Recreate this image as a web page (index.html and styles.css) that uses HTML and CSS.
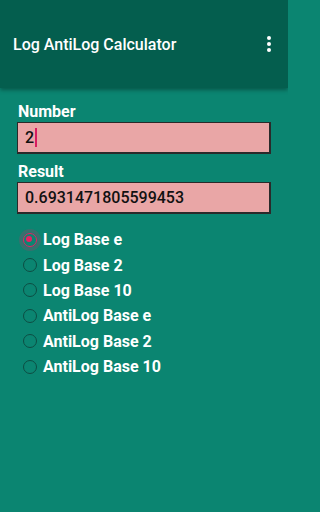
FILE: index.html
```html
<!DOCTYPE html>
<html>
<head>
<meta charset="utf-8">
<link rel="stylesheet" href="styles.css">
</head>
<body>
<div class="app">
  <header class="bar">
    <span class="title">Log AntiLog Calculator</span>
    <span class="menu"><i></i><i></i><i></i></span>
  </header>
  <main class="content">
    <label class="lbl">Number</label>
    <div class="field"><span>2</span><span class="caret"></span></div>
    <label class="lbl">Result</label>
    <div class="field"><span>0.6931471805599453</span></div>
    <ul class="radios">
      <li class="on"><span class="dot"></span>Log Base e</li>
      <li><span class="dot"></span>Log Base 2</li>
      <li><span class="dot"></span>Log Base 10</li>
      <li><span class="dot"></span>AntiLog Base e</li>
      <li><span class="dot"></span>AntiLog Base 2</li>
      <li><span class="dot"></span>AntiLog Base 10</li>
    </ul>
  </main>
</div>
</body>
</html>
```
FILE: styles.css
```css
* { box-sizing: border-box; }
html, body { margin: 0; padding: 0; background: #0b8571; }
body { width: 288px; height: 512px; overflow: hidden; font-family: Roboto, "Liberation Sans", sans-serif; }
.app { display: flex; flex-direction: column; height: 512px; }
.bar { height: 88px; background: #045e4e; display: flex; align-items: center; justify-content: space-between; padding: 0 17px 0 13px; box-shadow: 0 2px 4px rgba(0,0,0,0.35); position: relative; z-index: 1; }
.title { color: #fff; font-size: 16px; font-weight: 500; }
.menu { display: flex; flex-direction: column; gap: 2px; }
.menu i { width: 4px; height: 4px; background: #fff; border-radius: 50%; display: block; }
.content { flex: 1; background: #0b8571; padding: 14px 17px 0 17px; display: flex; flex-direction: column; }
.lbl { color: #fff; font-size: 16px; font-weight: 700; line-height: 19px; padding-left: 1px; }
.field { height: 32px; background: #e9a6a6; border: 1px solid #2a2a2a; border-right-width: 2px; border-bottom-width: 2px; margin: 1px 0 8px 0; display: flex; align-items: center; padding-left: 7px; font-size: 16px; font-weight: 500; color: #111; width: 254px; }
.caret { width: 1.5px; height: 19px; background: #d81b60; margin-left: 1px; }
.radios { list-style: none; margin: 5px 0 0 0; padding: 0; }
.radios li { display: flex; align-items: center; height: 25.4px; color: #fff; font-size: 16px; font-weight: 700; }
.dot { width: 14px; height: 14px; border: 1.6px solid #0d4d43; border-radius: 50%; margin: 0 6px 0 6px; position: relative; flex: none; }
.on .dot { border-color: #e91e63; box-shadow: 0 0 0 4px rgba(233,30,99,0.2); }
.on .dot::after { content: ""; position: absolute; left: 2.4px; top: 2.4px; width: 6px; height: 6px; border-radius: 50%; background: #e91e63; }
```
